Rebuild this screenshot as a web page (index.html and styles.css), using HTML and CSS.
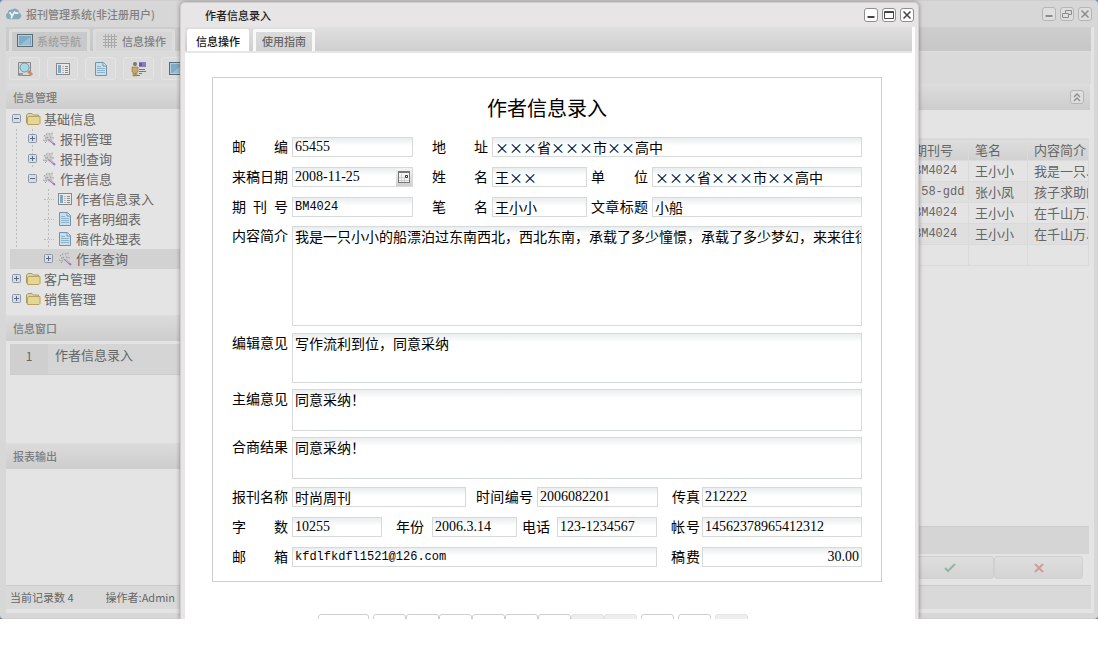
FILE: index.html
```html
<!DOCTYPE html>
<html lang="zh-CN">
<head>
<meta charset="utf-8">
<title>报刊管理系统</title>
<link rel="stylesheet" href="styles.css">
</head>
<body>
<svg class="sprite" aria-hidden="true">
  <symbol id="plus" viewBox="0 0 10 10"><rect x=".5" y=".5" width="8" height="8" rx="1" fill="#d9dde2" stroke="#8c97a8"/><path d="M2 4.500h5M4.500 2v5" stroke="#5b6b85"/></symbol>
  <symbol id="minus" viewBox="0 0 10 10"><rect x=".5" y=".5" width="8" height="8" rx="1" fill="#d9dde2" stroke="#8c97a8"/><path d="M2 4.500h5" stroke="#5b6b85"/></symbol>
  <symbol id="folder" viewBox="0 0 16 16"><path d="M1.500 12V4L3 2.500h4L8.500 4h5v8.500H2z" fill="#ddd3a2" stroke="#a99b68"/><path d="M2.500 13.500v-7L4 5.500h11v7l-1 1z" fill="#e3d793" stroke="#b8a25e"/></symbol>
  <symbol id="wand" viewBox="0 0 16 16"><path d="M7 1l2 2 3 0-1 3 2 2-3 1-1 3-2-2-4 1 1-4-2-2 3-1z" fill="#cdcdcd"/><path d="M3 5l4-3M2 9l4 1M8 3l4-1M9 6l4 1M6 6l2 4M4 7h3M4 12l2-2" stroke="#9a9a9a" stroke-dasharray="1.500 1"/><path d="M8 8l6 6" stroke="#a578c0" stroke-width="2"/><path d="M7.500 7l5 5" stroke="#e6dcea" stroke-width="1"/></symbol>
  <symbol id="form" viewBox="0 0 16 16"><rect x="1.500" y="2.500" width="13" height="11" fill="#e8e8e8" stroke="#888"/><path d="M3 4h3v8H3z" fill="#7fa9c6"/><path d="M7.500 5.500h1M10 5.500h3M7.500 7.500h1M10 7.500h3M7.500 9.500h1M10 9.500h3M7.500 11.500h1M10 11.500h3" stroke="#8a8a8a"/></symbol>
  <symbol id="doc" viewBox="0 0 16 16"><path d="M2.500 1.500h8l3 3v10h-11z" fill="#c9deea" stroke="#7194ae"/><path d="M10 1.500v3.500h3.500" fill="#e5eef3" stroke="#7194ae"/><path d="M4 5.500h4M4 7.500h8M4 9.500h8M4 11.500h8" stroke="#8db4cc"/></symbol>
  <symbol id="screen" viewBox="0 0 16 14"><rect x=".5" y=".5" width="15" height="12" fill="#b4ced9" stroke="#5c6d78"/><path d="M2 2h12v9H2z" fill="#7fabc6"/><path d="M3 11L13 3v8z" fill="#98bfd4"/></symbol>
  <symbol id="min" viewBox="0 0 10 10"><path d="M1.500 7h7" stroke="currentColor" stroke-width="2"/></symbol>
  <symbol id="max" viewBox="0 0 10 10"><path d="M.5 1.500h9v7h-9zM.5 2.500h9" fill="none" stroke="currentColor"/></symbol>
  <symbol id="restore" viewBox="0 0 10 10"><path d="M3.500 4V1.500h6v4H7M.5 4.500h6v4h-6z" fill="none" stroke="currentColor"/></symbol>
  <symbol id="close" viewBox="0 0 10 10"><path d="M1.500 1.500l7 7M8.500 1.500l-7 7" stroke="currentColor" stroke-width="1.500"/></symbol>
</svg>
<div class="desktop">
  <section class="app">
    <header class="titlebar">
      <svg class="logo" viewBox="0 0 18 14"><path d="M4 13a4 4 0 0 1-2-7.500A4 4 0 0 1 7 2a5 5 0 0 1 8 3.500A4 4 0 0 1 14 13z" fill="#86a9bd"/><path d="M4 5l3 4 3-5M7 8l-1 4M10 6h4" fill="none" stroke="#eef2f4" stroke-width="2"/></svg>
      <h1>报刊管理系统(非注册用户)</h1>
      <div class="winbtns">
        <button aria-label="最小化"><svg><use href="#min"/></svg></button>
        <button aria-label="还原"><svg><use href="#restore"/></svg></button>
        <button aria-label="关闭"><svg><use href="#close"/></svg></button>
      </div>
    </header>
    <div class="app-body">
      <nav class="tabs">
        <button class="tab dim"><svg class="i16"><use href="#screen"/></svg>系统导航</button>
        <button class="tab"><svg class="i16" viewBox="0 0 16 16"><path d="M3.500 1v14M6.500 1v14M9.500 1v14M12.500 1v14M1 3.500h14M1 6.500h14M1 9.500h14M1 12.500h14" stroke="#a9a9a9"/></svg>信息操作</button>
      </nav>
      <div class="toolbar">
        <button aria-label="查找"><svg class="i16" viewBox="0 0 16 16"><path d="M1.500 1.500h12v13h-12z" fill="#d8d8d8" stroke="#888"/><path d="M2 12h4v3H2z" fill="#999"/><circle cx="7.500" cy="6.500" r="4.500" fill="#a9d7e6" stroke="#6d98ab"/><path d="M11 10l4 4" stroke="#d08a66" stroke-width="3"/></svg></button>
        <button aria-label="表单"><svg class="i16"><use href="#form"/></svg></button>
        <button aria-label="文档"><svg class="i16"><use href="#doc"/></svg></button>
        <button aria-label="人员"><svg class="i16" viewBox="0 0 16 16"><circle cx="4" cy="3" r="2" fill="#777"/><path d="M1 6h6v5H6v4H4.500v-3H4v3H2v-4H1z" fill="#c9a766" stroke="#8a754d" stroke-width=".6"/><path d="M8 1h7v5H8z" fill="#8a7dbb"/><path d="M8 2h3v3H8z" fill="#665aa5"/><path d="M8 8.500h6M8 10.500h7M8 12.500h3M6 14.500h3" stroke="#777"/></svg></button>
        <button aria-label="显示"><svg class="i16"><use href="#screen"/></svg></button>
      </div>
      <div class="columns">
        <aside class="sidebar">
          <h2>信息管理</h2>
          <ul class="tree">
            <li><a href="#t1"><svg class="ex"><use href="#minus"/></svg><svg class="i16"><use href="#folder"/></svg>基础信息</a>
              <ul>
                <li><a href="#t2"><svg class="ex"><use href="#plus"/></svg><svg class="i16"><use href="#wand"/></svg>报刊管理</a></li>
                <li><a href="#t3"><svg class="ex"><use href="#plus"/></svg><svg class="i16"><use href="#wand"/></svg>报刊查询</a></li>
                <li><a href="#t4"><svg class="ex"><use href="#minus"/></svg><svg class="i16"><use href="#wand"/></svg>作者信息</a>
                  <ul>
                    <li><a href="#t5"><i class="ex leaf"></i><svg class="i16"><use href="#form"/></svg>作者信息录入</a></li>
                    <li><a href="#t6"><i class="ex leaf"></i><svg class="i16"><use href="#doc"/></svg>作者明细表</a></li>
                    <li><a href="#t7"><i class="ex leaf"></i><svg class="i16"><use href="#doc"/></svg>稿件处理表</a></li>
                    <li class="current"><a href="#t8"><svg class="ex"><use href="#plus"/></svg><svg class="i16"><use href="#wand"/></svg>作者查询</a></li>
                  </ul>
                </li>
              </ul>
            </li>
            <li><a href="#t9"><svg class="ex"><use href="#plus"/></svg><svg class="i16"><use href="#folder"/></svg>客户管理</a></li>
            <li><a href="#t10"><svg class="ex"><use href="#plus"/></svg><svg class="i16"><use href="#folder"/></svg>销售管理</a></li>
          </ul>
          <h2>信息窗口</h2>
          <ol class="windows"><li><b>1</b><span>作者信息录入</span></li></ol>
          <h2>报表输出</h2>
        </aside>
        <div class="records">
          <div class="records-head"><button aria-label="收起"><svg viewBox="0 0 10 10"><path d="M2 5l3-3 3 3M2 9l3-3 3 3" fill="none" stroke="currentColor" stroke-width="1.300"/></svg></button></div>
          <table>
            <colgroup><col class="c1"><col class="c2"><col class="c3"></colgroup>
            <thead><tr><th>期刊号</th><th>笔名</th><th>内容简介</th></tr></thead>
            <tbody>
              <tr><td class="mono">BM4024</td><td>王小小</td><td>我是一只.</td></tr>
              <tr><td class="mono">&nbsp;58-gdd</td><td>张小凤</td><td>孩子求助的</td></tr>
              <tr><td class="mono">BM4024</td><td>王小小</td><td>在千山万.</td></tr>
              <tr><td class="mono">BM4024</td><td>王小小</td><td>在千山万.</td></tr>
              <tr><td></td><td></td><td></td></tr>
            </tbody>
          </table>
          <div class="summary"></div>
          <div class="actions">
            <button aria-label="确定"><svg viewBox="0 0 12 10"><path d="M1 5l3 3 7-7" fill="none" stroke="#95b5a0" stroke-width="2"/></svg></button>
            <button aria-label="取消"><svg viewBox="0 0 12 10"><path d="M2 1l8 8M10 1L2 9" stroke="#cf9d98" stroke-width="2"/></svg></button>
          </div>
        </div>
      </div>
      <footer class="status"><span>当前记录数 4</span><span>操作者:Admin</span></footer>
    </div>
  </section>

  <section class="dialog" role="dialog" aria-labelledby="dlg">
    <header class="titlebar">
      <h1 id="dlg">作者信息录入</h1>
      <div class="winbtns">
        <button aria-label="最小化"><svg><use href="#min"/></svg></button>
        <button aria-label="最大化"><svg><use href="#max"/></svg></button>
        <button aria-label="关闭"><svg><use href="#close"/></svg></button>
      </div>
    </header>
    <div class="dialog-body">
      <nav class="tabs">
        <button class="tab on">信息操作</button>
        <button class="tab">使用指南</button>
      </nav>
      <form class="entry">
        <h2>作者信息录入</h2>
        <div class="row cols-a">
          <label for="zip">邮 编</label><input id="zip" class="num" value="65455">
          <label for="addr">地 址</label><input id="addr" value="×××省×××市××高中">
        </div>
        <div class="row cols-b">
          <label for="date">来稿日期</label>
          <span class="date"><input id="date" class="num" value="2008-11-25"><button type="button" aria-label="选择日期"><svg viewBox="0 0 12 12"><rect x=".5" y=".5" width="11" height="11" fill="#f4f4f4" stroke="#777"/><path d="M0 1h12" stroke="#777" stroke-width="2"/><path d="M3.500 3v8M6.500 7v4M1 6.500h6M1 9.500h10" stroke="#d0d0d0"/><path d="M7.500 4.500h2v2h-2z" fill="#fff" stroke="#333"/></svg></button></span>
          <label for="name">姓 名</label><input id="name" value="王××">
          <label for="unit">单 位</label><input id="unit" value="×××省×××市××高中">
        </div>
        <div class="row cols-b">
          <label for="issue">期 刊 号</label><input id="issue" class="mono" value="BM4024">
          <label for="pen">笔 名</label><input id="pen" value="王小小">
          <label for="title">文章标题</label><input id="title" value="小船">
        </div>
        <div class="row area tall"><label for="brief">内容简介</label><textarea id="brief" wrap="off">我是一只小小的船漂泊过东南西北，西北东南，承载了多少憧憬，承载了多少梦幻，来来往往</textarea></div>
        <div class="row area mid"><label for="edit">编辑意见</label><textarea id="edit">写作流利到位，同意采纳</textarea></div>
        <div class="row area"><label for="chief">主编意见</label><textarea id="chief">同意采纳！</textarea></div>
        <div class="row area last"><label for="result">合商结果</label><textarea id="result">同意采纳！</textarea></div>
        <div class="row cols-c">
          <label for="paper">报刊名称</label><input id="paper" value="时尚周刊">
          <label for="tno">时间编号</label><input id="tno" class="num" value="2006082201">
          <label for="fax">传真</label><input id="fax" class="num" value="212222">
        </div>
        <div class="row cols-d">
          <label for="words">字 数</label><input id="words" class="num" value="10255">
          <label for="year">年份</label><input id="year" class="num" value="2006.3.14">
          <label for="tel">电话</label><input id="tel" class="num" value="123-1234567">
          <label for="acct">帐号</label><input id="acct" class="num" value="14562378965412312">
        </div>
        <div class="row cols-e">
          <label for="mail">邮 箱</label><input id="mail" class="mono" value="kfdlfkdfl1521@126.com">
          <label for="fee">稿费</label><input id="fee" class="num right" value="30.00">
        </div>
      </form>
      <div class="pager">
        <button class="wide" aria-label="跳转"></button><span class="group"><button aria-label="首条"></button><button aria-label="上页"></button><button aria-label="上条"></button><button aria-label="下条"></button><button aria-label="下页"></button><button aria-label="末条"></button><button disabled aria-label="保存"></button><button disabled aria-label="撤销"></button></span><button aria-label="新增"></button><button aria-label="删除"></button><button disabled aria-label="提交"></button>
      </div>
    </div>
  </section>
</div>
</body>
</html>
```
FILE: styles.css
```css
* { box-sizing: border-box; }
body { margin: 0; background: #fff; font: 13px/20px "Noto Sans CJK SC", sans-serif; color: #666; }
button { font: inherit; color: inherit; padding: 0; border: 0; background: none; }
a { color: inherit; text-decoration: none; }
h1, h2, ul, ol { margin: 0; padding: 0; list-style: none; font-weight: 400; }
svg { display: block; flex: none; }
.sprite { position: absolute; width: 0; height: 0; }
.i16 { width: 16px; height: 16px; }

.desktop { display: grid; overflow: hidden; background: #5b83b5; }
.desktop > section { grid-area: 1 / 1; min-width: 0; }

/* main window */
.app { display: flex; flex-direction: column; padding: 0 4px 5px 6px; background: #d8d7d7; border-radius: 4px; border: solid #cfcdcd; border-width: 1px 0; }
.titlebar { display: flex; align-items: center; height: 26px; font-size: 11px; }
.titlebar h1 { flex: 1; font-size: 11px; font-weight: 500; color: #808080; }
.logo { width: 16px; height: 14px; margin-right: 4px; }
.winbtns { display: flex; gap: 4px; }
.winbtns button, .records-head button { display: grid; place-items: center; width: 14px; height: 14px; border: 1px solid #b5b5b5; border-radius: 3px; background: #dedede; color: #8c8c8c; }
.winbtns svg, .records-head svg { width: 10px; height: 10px; }
.app .winbtns { margin-right: 2px; }
.app-body { flex: 1; display: flex; flex-direction: column; background: #e4e4e4; padding-right: 3px; }
.tabs { display: flex; gap: 3px; height: 25px; padding: 2px 3px 0; background: linear-gradient(#cdcdcd, #c7c7c7); border-bottom: 1px solid #dcdcdc; }
.tab { display: flex; align-items: center; gap: 4px; padding: 0 9px 2px; border: 3px solid #dcdcdc; border-bottom: 0; border-radius: 3px 3px 0 0; background: #d6d6d6; font-size: 11px; font-weight: 500; line-height: 16px; color: #808080; }
.app .tab { padding: 0 6px 2px; }
.tab.dim { padding-left: 5px; color: #a0a0a0; background: #c9c9c9; }
.toolbar { display: flex; gap: 7px; height: 32px; padding: 5px 3px 4px; background: #dadada; }
.toolbar button { display: grid; place-items: center; width: 31px; border: 1px solid #e4e4e4; border-radius: 3px; background: #dcdcdc; }

.columns { flex: 1; display: flex; }
.sidebar { width: 190px; }
.sidebar h2, .records-head { height: 26px; padding-left: 7px; background: linear-gradient(#dcdcdc, #cdcdcd); font-size: 11px; font-weight: 500; line-height: 27px; color: #7c7c7c; }
.sidebar h2:first-child { height: 25px; }
.tree { padding-bottom: 6px; }
.tree a { display: flex; align-items: center; gap: 3px; height: 20px; padding-left: 6px; white-space: nowrap; }
.tree ul a { padding-left: 22px; }
.tree ul ul a { padding-left: 38px; }
.ex { width: 10px; height: 10px; flex: none; }
.leaf { height: 0; border-top: 1px dotted #bbb; }
.tree ul { background: linear-gradient(#bbb 50%, transparent 50%) 10px 0 / 1px 4px repeat-y; }
.tree ul ul { background-position: 42px 0; }
.tree > li > ul > li:not(:last-child) { background: linear-gradient(#bbb 50%, transparent 50%) 26px 0 / 1px 4px repeat-y; }
.current { margin-left: 4px; background: #d2d2d2; }
.tree .current a { padding-left: 34px; }
.windows { height: 102px; padding: 3px 0 0 4px; }
.windows li { display: flex; height: 31px; background: #d5d5d5; border-bottom: 1px solid #ccc; }
.windows b { width: 38px; background: #cfcfcf; font-weight: 400; font-size: 12px; text-align: center; line-height: 24px; }
.windows span { padding-left: 7px; line-height: 22px; }
.status { display: flex; gap: 32px; height: 24px; margin-bottom: 4px; padding-left: 4px; border-top: 1px solid #cacaca; background: #d9d9d9; font-size: 11px; line-height: 22px; }

.records { flex: 1; display: flex; flex-direction: column; padding-right: 1px; }
.records-head { display: flex; justify-content: flex-end; align-items: center; padding-right: 6px; margin-bottom: 28px; }
table { align-self: flex-end; width: 181px; margin-right: 1px; table-layout: fixed; border-collapse: collapse; }
.c1 { width: 61px; }
.c2 { width: 59px; }
.c3 { width: 61px; }
th, td { height: 21px; padding: 0 0 0 6px; border: 1px solid #dadada; border-left-color: #d3d3d3; font-weight: 400; text-align: left; white-space: nowrap; overflow: hidden; line-height: 18px; }
th { height: 22px; background: linear-gradient(#dedede, #d0d0d0); }
tbody tr:nth-child(even) { background: #dfdfdf; }
.summary { height: 28px; margin: auto 1px 2px 0; border-top: 1px solid #ccc; background: #d5d5d5; }
.actions { display: flex; justify-content: flex-end; padding: 0 7px 6px 0; }
.actions button { display: grid; place-items: center; width: 89px; height: 23px; border: 1px solid #d0d0d0; border-radius: 3px; background: linear-gradient(#dedede, #d4d4d4); }
.actions svg { width: 12px; height: 10px; }

/* entry window */
.dialog { position: relative; margin: 2px 179px 0 180px; padding: 0 3px 0 4px; border: 1px solid #d2cece; border-bottom: 0; border-radius: 5px 5px 0 0; background: #e7e5e5; box-shadow: 0 0 4px rgba(0, 0, 0, .4); }
.dialog .titlebar { height: 24px; }
.dialog h1 { padding-left: 20px; color: #222; }
.dialog .winbtns { margin-right: 1px; }
.dialog .winbtns button { border-color: #8f8f8f; background: #fff; color: #444; }
.dialog-body { background: #fff; }
.dialog .tabs { height: 26px; gap: 4px; margin-right: 3px; padding: 2px 2px 0; background: linear-gradient(#e0e0e0, #cfcfcf); border-bottom: 2px solid #e6e6e6; }
.dialog .tab { padding: 0 6px 2px; border-color: #f8f8f8; background: linear-gradient(#dcdcdc, #d2d2d2); color: #666; }
.dialog .tab.on { background: #fff; border-color: #fff; color: #111; }

.entry { margin: 24px 33px 0 27px; padding: 0 19px 4px; border: 1px solid #cdcdcd; font-size: 14px; color: #000; }
.entry h2 { padding: 16px 0; font-size: 20px; line-height: 27px; text-align: center; }
.row { display: grid; grid-template-rows: 100%; height: 20px; margin-bottom: 10px; }
.row label { line-height: 18px; padding-right: 4px; text-align-last: justify; white-space: nowrap; }
.cols-a { grid-template-columns: 60px 121px 79px 1fr; }
.cols-b { grid-template-columns: 60px 121px 79px 95px 65px 1fr; }
.cols-c { grid-template-columns: 60px 1fr 71px 121px 44px 160px; }
.cols-d { grid-template-columns: 60px 90px 50px 85px 40px 1fr 45px 160px; }
.cols-e { grid-template-columns: 60px 1fr 45px 160px; }
.row.area { grid-template-columns: 60px 1fr; height: 42px; margin-bottom: 6px; }
.row.tall { height: 100px; margin: -1px 0 7px; }
.row.mid { height: 50px; }
.row.last { margin-bottom: 8px; }
.cols-a label:nth-of-type(2), .cols-b label:nth-of-type(2) { padding-left: 19px; }
.cols-b label:nth-of-type(3) { padding-left: 4px; }
.cols-c label:nth-of-type(2) { padding-left: 10px; }
.cols-c label:last-of-type, .cols-d label:last-of-type, .cols-e label:last-of-type { padding-left: 14px; padding-right: 2px; }
.cols-d label:nth-of-type(2) { padding-left: 14px; padding-right: 8px; }
.cols-d label:nth-of-type(3) { padding-left: 5px; padding-right: 7px; }
input, textarea { width: 100%; min-width: 0; height: 100%; margin: 0; padding: 0 2px; border: 1px solid #d6dadb; border-radius: 0; background: linear-gradient(#e9edee, #fff 8px); color: #000; font: 14px/18px "Noto Sans CJK SC", sans-serif; outline: 0; resize: none; overflow: hidden; }
textarea { display: block; }
.num { font-family: "Liberation Serif", serif; }
.mono { font-family: "Liberation Mono", monospace; font-size: 12px; }
.right { text-align: right; }
.date { display: flex; min-width: 0; border: 1px solid #d6dadb; }
.date input { flex: 1; border: 0; }
.date button { display: grid; place-items: center; width: 16px; background: linear-gradient(#f4f4f4, #cfcfcf); }
.date svg { width: 12px; height: 12px; }

.pager { display: flex; gap: 4px; height: 37px; padding: 32px 0 0 133px; overflow: hidden; }
.pager button { flex: none; width: 33px; height: 22px; border: 1px solid #cfcfcf; border-radius: 3px; background: #fff; }
.pager button:disabled { background: #eee; border-color: #e2e2e2; }
.pager .wide { width: 51px; }
.group { display: flex; }
```
